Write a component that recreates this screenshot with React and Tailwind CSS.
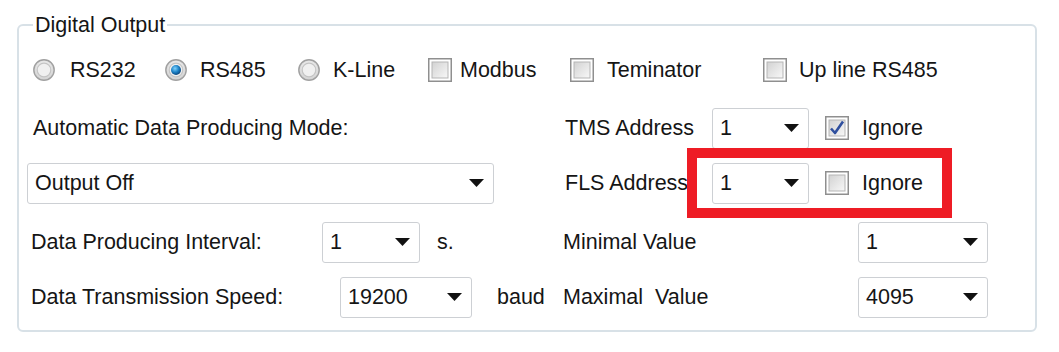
import React from 'react';

const font = { fontFamily: '"Liberation Sans", Arial, sans-serif' };

function Radio({ checked }) {
  return (
    <svg width="22" height="22" viewBox="0 0 22 22" className="shrink-0">
      <defs>
        <radialGradient id="rg" cx="50%" cy="40%" r="60%">
          <stop offset="0%" stopColor="#ffffff" />
          <stop offset="100%" stopColor="#cfcfcf" />
        </radialGradient>
        <radialGradient id="blue" cx="40%" cy="35%" r="70%">
          <stop offset="0%" stopColor="#7fd3ff" />
          <stop offset="55%" stopColor="#1a7fc4" />
          <stop offset="100%" stopColor="#0b3f73" />
        </radialGradient>
      </defs>
      <circle cx="11" cy="11" r="10.2" fill="url(#rg)" stroke="#a0a0a0" strokeWidth="1.4" />
      <circle cx="11" cy="11" r="6.8" fill="#f0f0f0" stroke="#c4c4c4" strokeWidth="1.2" />
      {checked && <circle cx="11" cy="11" r="5" fill="url(#blue)" />}
    </svg>
  );
}

function Check({ checked }) {
  return (
    <svg width="24" height="24" viewBox="0 0 24 24" className="shrink-0">
      <defs>
        <linearGradient id="cg" x1="0" y1="0" x2="1" y2="1">
          <stop offset="0%" stopColor="#d2d2d2" />
          <stop offset="100%" stopColor="#f8f8f8" />
        </linearGradient>
      </defs>
      <rect x="0.75" y="0.75" width="22.5" height="22.5" fill="#fff" stroke="#8f8f8f" strokeWidth="1.5" />
      <rect x="4" y="4" width="16" height="16" fill="url(#cg)" stroke="#b5b5b5" strokeWidth="1" />
      {checked && (
        <path d="M6 12.5 L10 17 L18 5.5" fill="none" stroke="#2f4f9e" strokeWidth="2.6" strokeLinejoin="round" />
      )}
    </svg>
  );
}

function Combo({ value, className }) {
  return (
    <div className={`flex items-center justify-between h-[41px] bg-white border-[1.5px] border-[#cdd0d4] rounded-[3px] pl-[7px] pr-[9px] shrink-0 ${className}`}>
      <span>{value}</span>
      <svg width="15" height="8" viewBox="0 0 15 8" className="shrink-0">
        <path d="M0 0 H15 L7.5 8 Z" fill="#111" />
      </svg>
    </div>
  );
}

export default function App() {
  return (
    <div className="w-[1059px] h-[352px] bg-white text-[#151515] text-[21.5px] pt-[14px] pl-[17px] whitespace-nowrap" style={font}>
      <fieldset className="w-[1020px] h-[318px] border-2 border-[#d8e1e7] rounded-[6px] p-0 m-0">
        <legend className="ml-[14px] px-[2px] leading-[22px]">Digital Output</legend>

        {/* interface selection */}
        <div className="flex items-center h-[26px] mt-[21px] pl-[14px]">
          <div className="flex items-center gap-[15px] w-[132px]"><Radio /><span>RS232</span></div>
          <div className="flex items-center gap-[13px] w-[133px]"><Radio checked /><span>RS485</span></div>
          <div className="flex items-center gap-[13px] w-[130px]"><Radio /><span>K-Line</span></div>
          <div className="flex items-center gap-[8px] w-[142px]"><Check /><span>Modbus</span></div>
          <div className="flex items-center gap-[13px] w-[193px]"><Check /><span>Teminator</span></div>
          <div className="flex items-center gap-[12px]"><Check /><span>Up line RS485</span></div>
        </div>

        <div className="flex items-center h-[40px] mt-[25px]">
          <div className="w-[546px] pl-[14px] shrink-0">Automatic Data Producing Mode:</div>
          <div className="flex items-center">
            <span className="w-[147px] shrink-0">TMS Address</span>
            <Combo value="1" className="w-[97px]" />
            <div className="ml-[16px]"><Check checked /></div>
            <span className="ml-[13px]">Ignore</span>
          </div>
        </div>

        <div className="flex items-center h-[70px]">
          <div className="w-[546px] pl-[8px] pr-[71px] shrink-0">
            <Combo value="Output Off" className="w-full" />
          </div>
          <div className="flex items-center">
            <span className="w-[122px] shrink-0">FLS Address</span>
            <div className="flex items-center w-[265px] h-[70px] border-[10px] border-[#ee1c25] pl-[15px] shrink-0">
              <Combo value="1" className="w-[97px]" />
              <div className="ml-[16px]"><Check /></div>
              <span className="ml-[13px]">Ignore</span>
            </div>
          </div>
        </div>

        <div className="flex items-center h-[42px] mt-[3px]">
          <div className="w-[544px] pl-[12px] flex items-center shrink-0">
            <span className="w-[291px] shrink-0">Data Producing Interval:</span>
            <Combo value="1" className="w-[98px]" />
            <span className="ml-[17px]">s.</span>
          </div>
          <span className="w-[295px] shrink-0">Minimal Value</span>
          <Combo value="1" className="w-[130px]" />
        </div>

        <div className="flex items-center h-[42px] mt-[13px]">
          <div className="w-[544px] pl-[12px] flex items-center shrink-0">
            <span className="w-[309px] shrink-0">Data Transmission Speed:</span>
            <Combo value="19200" className="w-[132px]" />
            <span className="ml-[25px]">baud</span>
          </div>
          <span className="w-[295px] shrink-0 whitespace-pre">Maximal  Value</span>
          <Combo value="4095" className="w-[130px]" />
        </div>
      </fieldset>
    </div>
  );
}
